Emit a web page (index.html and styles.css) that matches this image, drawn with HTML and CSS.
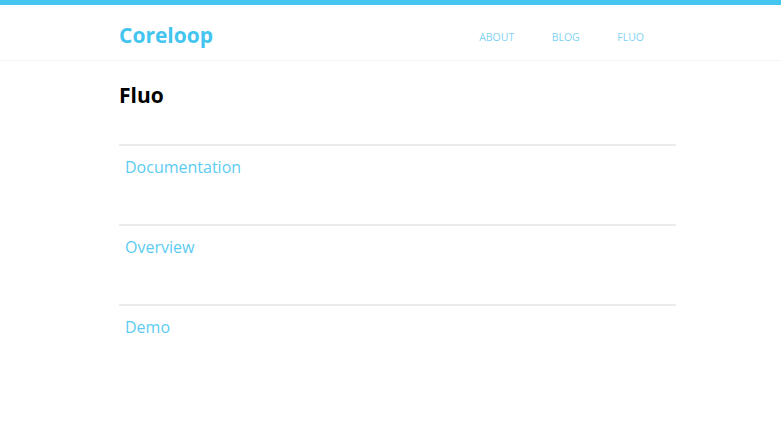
FILE: index.html
```html
<!DOCTYPE html>
<html lang="en">
<head>
  <meta charset="UTF-8">
  <title>Fluo - Coreloop</title>
  <link rel="stylesheet" href="styles.css">
</head>
<body>
  <header class="site-header">
    <div class="container header-inner">
      <a class="logo" href="#">Coreloop</a>
      <nav class="nav">
        <a href="#">About</a>
        <a href="#">Blog</a>
        <a href="#">Fluo</a>
      </nav>
    </div>
  </header>
  <main class="container">
    <h1 class="page-title">Fluo</h1>
    <ul class="sections">
      <li><a href="#">Documentation</a></li>
      <li><a href="#">Overview</a></li>
      <li><a href="#">Demo</a></li>
    </ul>
  </main>
</body>
</html>
```
FILE: styles.css
```css
body{
  margin: 0;
  font-family: "Open Sans", "DejaVu Sans", sans-serif;
  background-color: #fff;
  color: #000;
  border-top: 5px solid #43c5f0;
}
a{
  text-decoration: none;
  color: #5ccbf2;
}
.container{
  width: 557px;
  margin-left: 119px;
}
.site-header{
  height: 55px;
  border-bottom: 1px solid #f3f3f3;
}
.header-inner{
  height: 100%;
  display: flex;
  align-items: center;
  justify-content: space-between;
}
.logo{
  font-size: 21px;
  font-weight: bold;
  color: #43c5f0;
  margin-top: 5px;
}
.nav{
  display: flex;
  gap: 37.5px;
  margin-right: 32px;
  margin-top: 8px;
}
.nav a{
  font-size: 10.5px;
  text-transform: uppercase;
  color: #7fd4f3;
}
.page-title{
  margin: 16px 0 0;
  font-size: 21px;
  font-weight: bold;
  line-height: 36px;
}
.sections{
  list-style: none;
  margin: 31px 0 0;
  padding: 0;
}
.sections li{
  border-top: 2px solid #ebebeb;
  height: 78px;
  padding-left: 6px;
}
.sections a{
  display: block;
  font-size: 16px;
  line-height: 20px;
  margin-top: 11px;
}
```
